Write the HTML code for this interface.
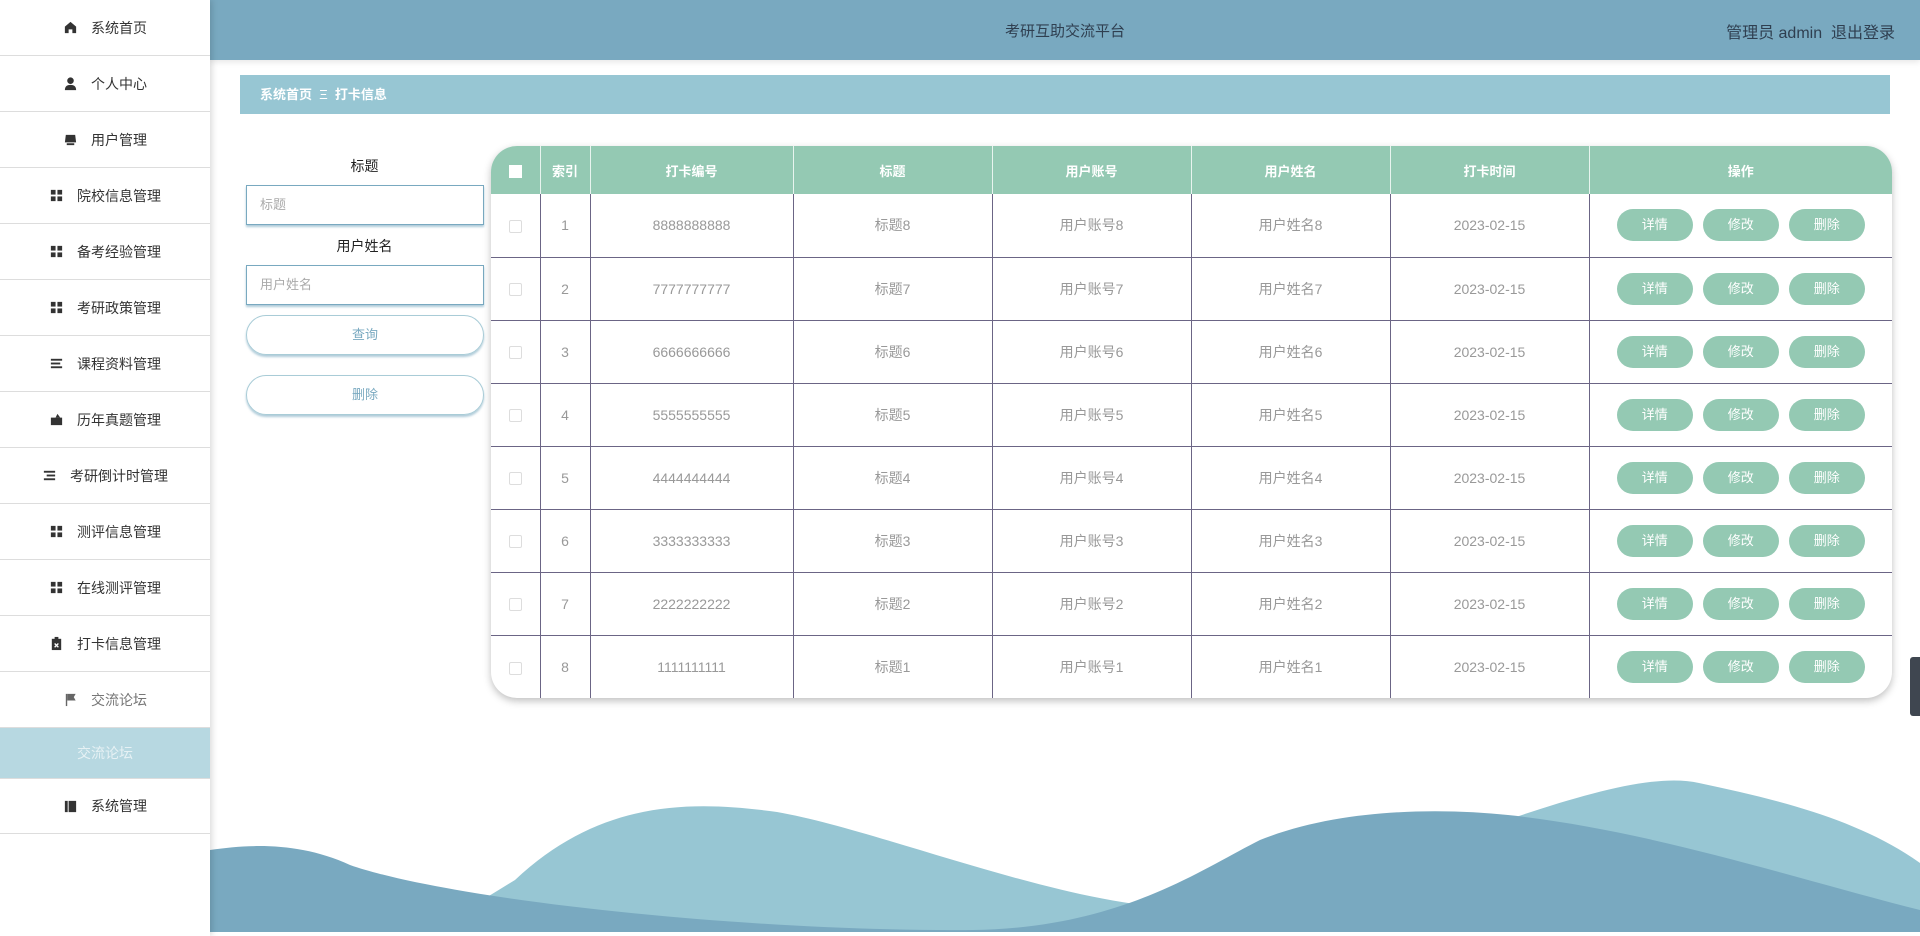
<!DOCTYPE html>
<html><head><meta charset="utf-8"><style>
*{margin:0;padding:0;box-sizing:border-box}
body{width:1920px;height:936px;position:relative;overflow:hidden;background:#fff;font-family:"Liberation Sans","Noto Sans CJK SC",sans-serif}
.side{position:absolute;left:0;top:0;width:210px;height:936px;background:#fff;box-shadow:2px 0 6px rgba(0,0,0,.15);z-index:3}
.mi{height:56px;border-bottom:1px solid #ddd;display:flex;align-items:center;justify-content:center;font-size:14px;color:#333}
.mi svg{width:15px;height:15px;margin-right:13px;fill:#333}
.mi.sel{background:#b7d8e1;color:#e6f1f4;height:50px;border-bottom:none}
.top{position:absolute;left:210px;top:0;width:1710px;height:60px;background:#79a9c0;box-shadow:0 2px 6px rgba(0,0,0,.1)}
.title{position:absolute;left:0;width:100%;top:20px;text-align:center;font-size:15px;color:#2f3f50}
.user{position:absolute;right:25px;top:19px;font-size:16px;color:#2f3f50}
.bc{position:absolute;left:240px;top:75px;width:1650px;height:39px;background:#97c6d3;color:#fff;font-size:13px;font-weight:bold;line-height:39px;padding-left:20px}
.lbl{position:absolute;left:246px;width:237px;text-align:center;font-size:14px;color:#222}
.inp{position:absolute;left:246px;width:238px;height:40px;border:1px solid #79a9c0;box-shadow:0 2px 2px rgba(121,169,192,.6);font-size:13px;color:#aaa;padding-left:13px;line-height:38px}
.btn{position:absolute;left:246px;width:238px;height:40px;border:1px solid #a9ccd7;border-radius:20px;box-shadow:0 2px 2px rgba(121,169,192,.6);text-align:center;line-height:38px;font-size:13px;color:#79a9c0}
.tbl{position:absolute;left:491px;top:146px;width:1401px;height:552px;border-radius:26px;box-shadow:0 3px 8px rgba(0,0,0,.25);overflow:hidden;background:#fff}
table{border-collapse:collapse;width:1401px;table-layout:fixed}
th{background:#94c9b3;color:#fff;font-size:13px;height:48px;border-right:1px solid #e8f4ef;font-weight:bold;vertical-align:middle}
td{height:63px;border-right:1px solid #6b6585;border-bottom:1px solid #6b6585;text-align:center;color:#999;font-size:14px}
tr td:last-child,tr th:last-child{border-right:none}
tr:last-child td{border-bottom:none}
.cb{display:inline-block;width:13px;height:13px;border:1px solid #ddd;border-radius:2px;vertical-align:middle}
.hcb{display:inline-block;width:13px;height:13px;background:#fff;vertical-align:middle}
.ob{display:inline-block;width:76px;height:32px;line-height:32px;border-radius:16px;background:#94c9b3;color:#fff;font-size:13px;margin:0 5px}
.sw{position:absolute;left:1910px;top:657px;width:10px;height:59px;background:#3f4650;border-radius:3px 0 0 3px}
</style></head><body>
<div class="side">
<div class="mi"><svg viewBox="0 0 16 16"><path d="M8 2L2 7v7h4v-4h4v4h4V7z"/></svg>系统首页</div>
<div class="mi"><svg viewBox="0 0 16 16"><circle cx="8" cy="5" r="3.5"/><path d="M2 15c0-4 2.5-5.5 6-5.5s6 1.5 6 5.5z"/></svg>个人中心</div>
<div class="mi"><svg viewBox="0 0 16 16"><path d="M3 3h10l1 8H2z"/><rect x="4" y="12" width="8" height="2"/></svg>用户管理</div>
<div class="mi"><svg viewBox="0 0 16 16"><rect x="2" y="2" width="5" height="5"/><rect x="9" y="2" width="5" height="5"/><rect x="2" y="9" width="5" height="5"/><rect x="9" y="9" width="5" height="5"/></svg>院校信息管理</div>
<div class="mi"><svg viewBox="0 0 16 16"><rect x="2" y="2" width="5" height="5"/><rect x="9" y="2" width="5" height="5"/><rect x="2" y="9" width="5" height="5"/><rect x="9" y="9" width="5" height="5"/></svg>备考经验管理</div>
<div class="mi"><svg viewBox="0 0 16 16"><rect x="2" y="2" width="5" height="5"/><rect x="9" y="2" width="5" height="5"/><rect x="2" y="9" width="5" height="5"/><rect x="9" y="9" width="5" height="5"/></svg>考研政策管理</div>
<div class="mi"><svg viewBox="0 0 16 16"><rect x="2" y="3" width="12" height="2"/><rect x="2" y="7" width="10" height="2"/><rect x="2" y="11" width="12" height="2"/></svg>课程资料管理</div>
<div class="mi"><svg viewBox="0 0 16 16"><path d="M2 6h12v8H2z"/><path d="M9 2l3 4H7z"/></svg>历年真题管理</div>
<div class="mi"><svg viewBox="0 0 16 16"><rect x="2" y="3" width="12" height="2"/><rect x="5" y="7" width="9" height="2"/><rect x="2" y="11" width="12" height="2"/></svg>考研倒计时管理</div>
<div class="mi"><svg viewBox="0 0 16 16"><rect x="2" y="2" width="5" height="5"/><rect x="9" y="2" width="5" height="5"/><rect x="2" y="9" width="5" height="5"/><rect x="9" y="9" width="5" height="5"/></svg>测评信息管理</div>
<div class="mi"><svg viewBox="0 0 16 16"><rect x="2" y="2" width="5" height="5"/><rect x="9" y="2" width="5" height="5"/><rect x="2" y="9" width="5" height="5"/><rect x="9" y="9" width="5" height="5"/></svg>在线测评管理</div>
<div class="mi"><svg viewBox="0 0 16 16"><path d="M3 3h10v12H3z"/><rect x="6" y="1" width="4" height="3"/><path d="M6 8l4 4M10 8l-4 4" stroke="#fff" stroke-width="1.4"/></svg>打卡信息管理</div>
<div class="mi" style="color:#777"><svg viewBox="0 0 16 16" style="fill:#666"><rect x="3" y="2" width="1.5" height="13"/><path d="M4.5 2h9l-2 3.5 2 3.5h-9z"/></svg>交流论坛</div>
<div class="mi sel">交流论坛</div>
<div class="mi" style="border-top:1px solid #ddd"><svg viewBox="0 0 16 16"><rect x="2" y="2" width="3" height="12"/><path d="M6 2h8v12H6z"/></svg>系统管理</div>
</div>
<div class="top"><div class="title">考研互助交流平台</div><div class="user">管理员 admin &nbsp;退出登录</div></div>
<div class="bc">系统首页 &nbsp;<span style="font-weight:normal">Ξ</span>&nbsp; 打卡信息</div>
<div class="lbl" style="top:156px">标题</div>
<div class="inp" style="top:185px">标题</div>
<div class="lbl" style="top:236px">用户姓名</div>
<div class="inp" style="top:265px">用户姓名</div>
<div class="btn" style="top:315px">查询</div>
<div class="btn" style="top:375px">删除</div>
<div class="tbl"><table>
<colgroup><col style="width:49px"><col style="width:50px"><col style="width:203px"><col style="width:199px"><col style="width:199px"><col style="width:199px"><col style="width:199px"><col></colgroup>
<tr><th><span class="hcb"></span></th><th>索引</th><th>打卡编号</th><th>标题</th><th>用户账号</th><th>用户姓名</th><th>打卡时间</th><th>操作</th></tr>
<tr><td><span class="cb"></span></td><td>1</td><td>8888888888</td><td>标题8</td><td>用户账号8</td><td>用户姓名8</td><td>2023-02-15</td><td><span class="ob">详情</span><span class="ob">修改</span><span class="ob">删除</span></td></tr>
<tr><td><span class="cb"></span></td><td>2</td><td>7777777777</td><td>标题7</td><td>用户账号7</td><td>用户姓名7</td><td>2023-02-15</td><td><span class="ob">详情</span><span class="ob">修改</span><span class="ob">删除</span></td></tr>
<tr><td><span class="cb"></span></td><td>3</td><td>6666666666</td><td>标题6</td><td>用户账号6</td><td>用户姓名6</td><td>2023-02-15</td><td><span class="ob">详情</span><span class="ob">修改</span><span class="ob">删除</span></td></tr>
<tr><td><span class="cb"></span></td><td>4</td><td>5555555555</td><td>标题5</td><td>用户账号5</td><td>用户姓名5</td><td>2023-02-15</td><td><span class="ob">详情</span><span class="ob">修改</span><span class="ob">删除</span></td></tr>
<tr><td><span class="cb"></span></td><td>5</td><td>4444444444</td><td>标题4</td><td>用户账号4</td><td>用户姓名4</td><td>2023-02-15</td><td><span class="ob">详情</span><span class="ob">修改</span><span class="ob">删除</span></td></tr>
<tr><td><span class="cb"></span></td><td>6</td><td>3333333333</td><td>标题3</td><td>用户账号3</td><td>用户姓名3</td><td>2023-02-15</td><td><span class="ob">详情</span><span class="ob">修改</span><span class="ob">删除</span></td></tr>
<tr><td><span class="cb"></span></td><td>7</td><td>2222222222</td><td>标题2</td><td>用户账号2</td><td>用户姓名2</td><td>2023-02-15</td><td><span class="ob">详情</span><span class="ob">修改</span><span class="ob">删除</span></td></tr>
<tr><td><span class="cb"></span></td><td>8</td><td>1111111111</td><td>标题1</td><td>用户账号1</td><td>用户姓名1</td><td>2023-02-15</td><td><span class="ob">详情</span><span class="ob">修改</span><span class="ob">删除</span></td></tr>
</table></div>
<svg style="position:absolute;left:210px;top:760px" width="1710" height="172" viewBox="210 760 1710 172">
<path fill="#97c6d3" d="M430 932 L515 880 C600 800 690 800 777 812 C880 830 1060 905 1181 908 C1350 900 1600 760 1699 783 C1780 800 1860 820 1920 863 L1920 932 Z"/>
<path fill="#79a9c0" d="M210 850 C250 844 300 842 350 865 C450 900 750 932 973 930 C1120 928 1200 870 1260 840 C1340 808 1440 808 1508 815 C1650 830 1800 880 1920 910 L1920 932 L210 932 Z"/>
</svg>
<div class="sw"></div>
</body></html>
